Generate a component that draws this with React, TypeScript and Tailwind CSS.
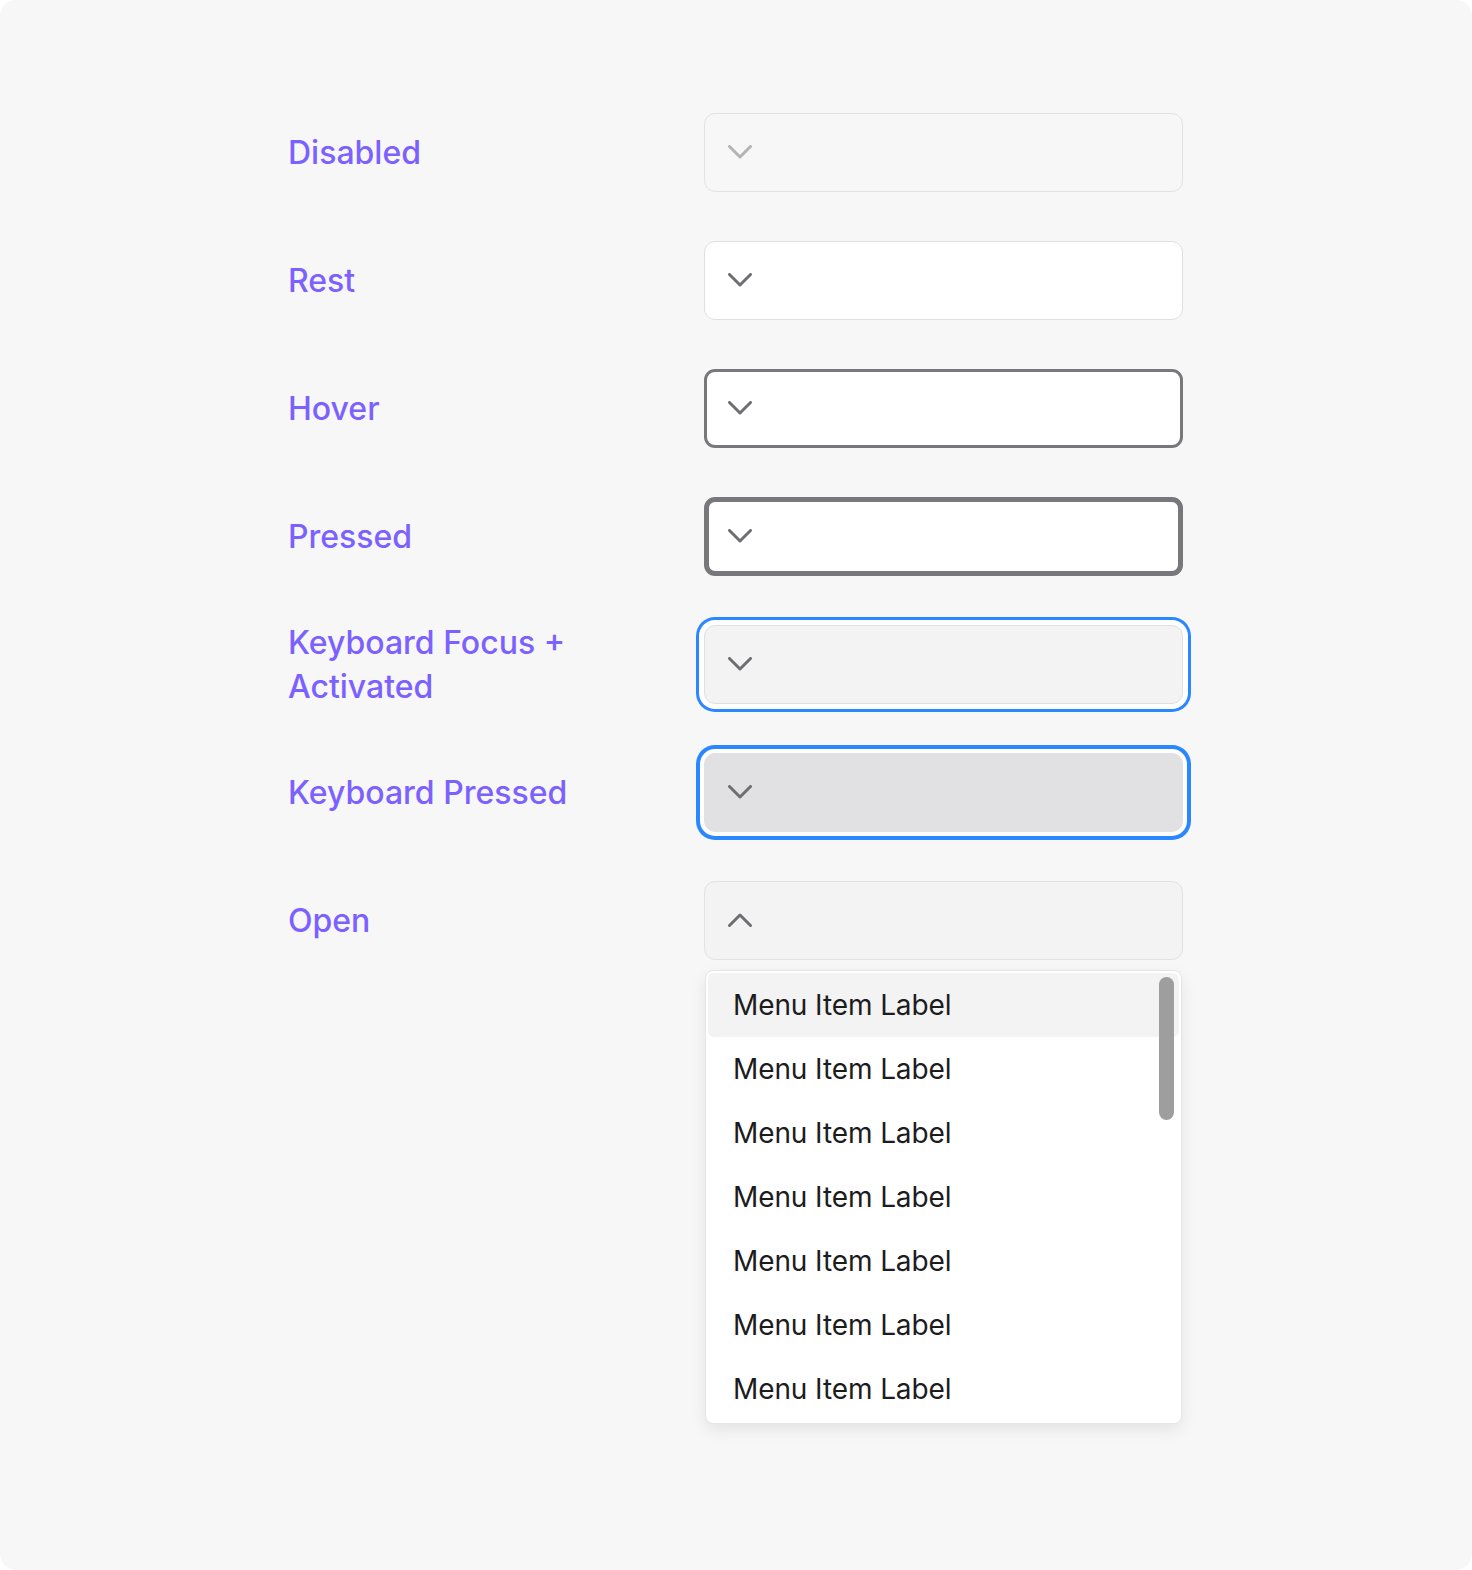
import React from "react";

type Variant = "disabled" | "rest" | "hover" | "pressed" | "focus" | "kpressed" | "open";

const Chevron = ({ up = false, color }: { up?: boolean; color: string }) => (
  <svg width="24" height="14" viewBox="0 0 24 14" fill="none" className="block">
    <polyline
      points={up ? "1.5,12.5 12,2 22.5,12.5" : "1.5,1.5 12,12 22.5,1.5"}
      stroke={color}
      strokeWidth="3"
      strokeLinecap="round"
      strokeLinejoin="round"
    />
  </svg>
);

const boxClass: Record<Variant, string> = {
  disabled: "bg-[#f7f7f7] border border-[#e3e3e3] pl-[23px]",
  rest: "bg-white border border-[#e0e0e0] pl-[23px]",
  hover: "bg-white border-[3px] border-[#77777c] pl-[21px]",
  pressed: "bg-white border-[5px] border-[#77777c] pl-[19px]",
  focus:
    "bg-[#f3f3f3] border border-[#e0e0e0] pl-[23px] shadow-[0_0_0_5px_#ffffff,0_0_0_8px_#2b87ff]",
  kpressed:
    "bg-[#e1e1e3] border border-[#e1e1e3] pl-[23px] shadow-[0_0_0_4px_#ffffff,0_0_0_8px_#2b87ff]",
  open: "bg-[#f3f3f3] border border-[#e2e2e2] pl-[23px]",
};

const rows: { label: React.ReactNode; variant: Variant }[] = [
  { label: "Disabled", variant: "disabled" },
  { label: "Rest", variant: "rest" },
  { label: "Hover", variant: "hover" },
  { label: "Pressed", variant: "pressed" },
  { label: "Keyboard Focus + Activated", variant: "focus" },
  { label: "Keyboard Pressed", variant: "kpressed" },
  { label: "Open", variant: "open" },
];

const Menu = () => (
  <div className="absolute left-[1px] top-[calc(100%+10px)] w-[477px] rounded-[8px] border border-[#e6e6e6] bg-white p-[2px] shadow-[0_6px_16px_rgba(0,0,0,0.08)]">
    <div className="flex flex-col">
      {Array.from({ length: 7 }).map((_, i) => (
        <div
          key={i}
          className={`flex h-[64px] items-center rounded-[6px] pl-[25px] text-[28px] tracking-[-0.1px] text-[#1c1c1e] ${
            i === 0 ? "bg-[#f3f3f3]" : ""
          }`}
        >
          Menu Item Label
        </div>
      ))}
    </div>
    <div className="absolute right-[7px] top-[6px] h-[143px] w-[15px] rounded-full bg-[#9e9e9e]" />
  </div>
);

export default function App() {
  return (
    <div
      className="w-[1472px] h-[1570px] bg-white"
      style={{ fontFamily: "Inter, 'Noto Sans', sans-serif" }}
    >
      <div className="w-full h-full rounded-[16px] bg-[#f7f7f7] pt-[88px] pl-[288px]">
        <div className="flex flex-col">
          {rows.map((r, i) => (
            <div key={i} className="flex h-[128px] items-center">
              <div className="w-[290px] pt-[2px] text-[32px] leading-[44px] font-medium text-[#7b61ff]">
                {r.label}
              </div>
              <div className="ml-[126px] relative">
                <div
                  className={`box-border flex h-[79px] w-[479px] items-center rounded-[11px] ${boxClass[r.variant]}`}
                >
                  <Chevron
                    up={r.variant === "open"}
                    color={r.variant === "disabled" ? "#b4b4b6" : "#6e6e73"}
                  />
                </div>
                {r.variant === "open" && <Menu />}
              </div>
            </div>
          ))}
        </div>
      </div>
    </div>
  );
}
